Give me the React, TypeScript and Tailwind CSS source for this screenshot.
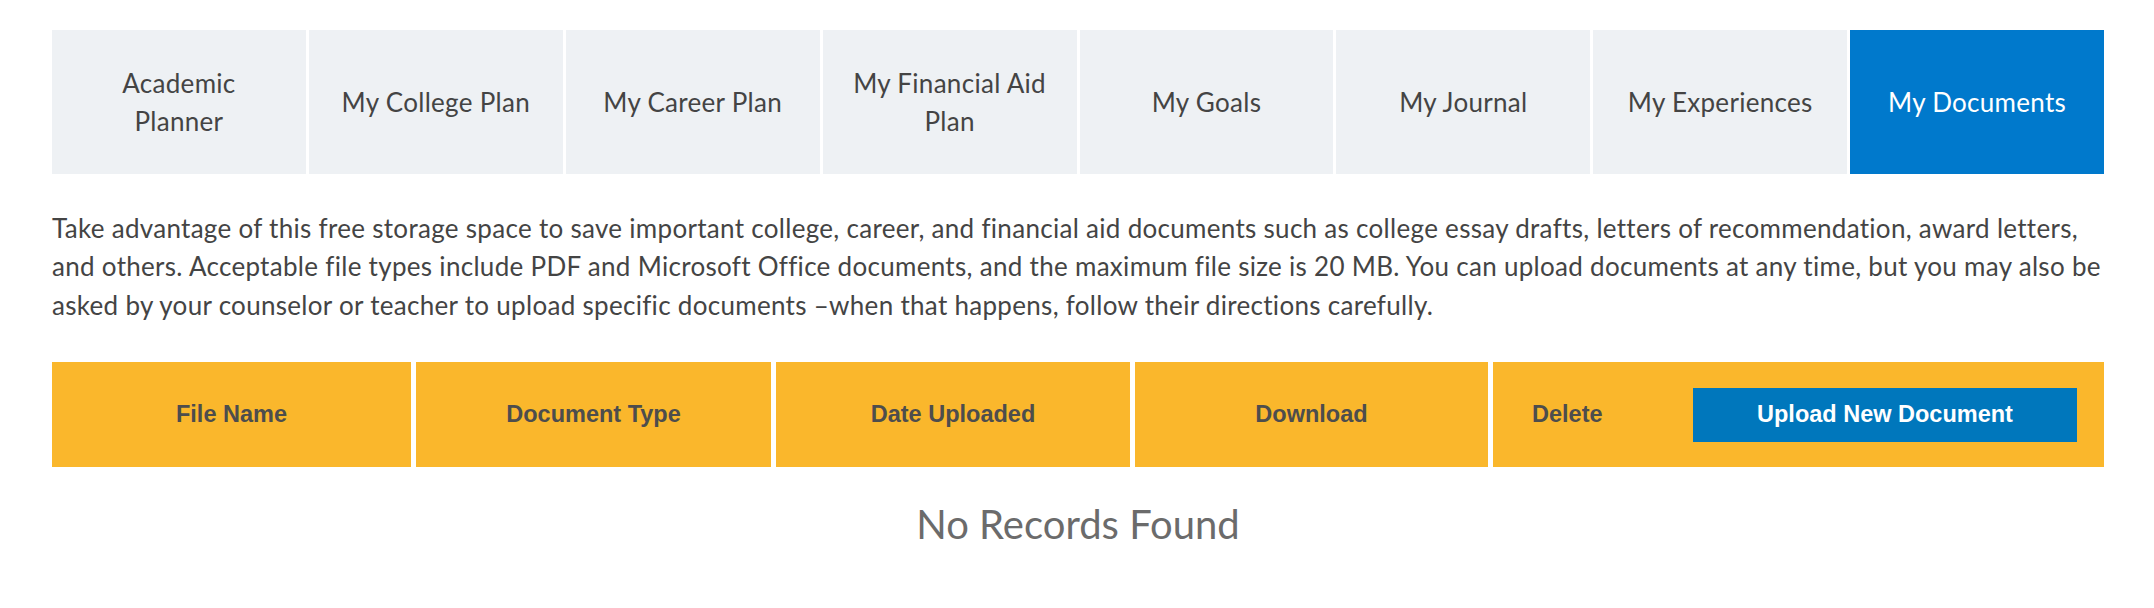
import React from "react";

const tabs = [
  "Academic Planner",
  "My College Plan",
  "My Career Plan",
  "My Financial Aid Plan",
  "My Goals",
  "My Journal",
  "My Experiences",
  "My Documents",
];

const tabLabels: React.ReactNode[] = [
  <>Academic<br />Planner</>,
  "My College Plan",
  "My Career Plan",
  <>My Financial Aid<br />Plan</>,
  "My Goals",
  "My Journal",
  "My Experiences",
  "My Documents",
];

export default function App() {
  return (
    <div className="w-[2154px] min-h-[608px] bg-white px-[52px] pt-[30px] font-['Lato',_sans-serif]">
      <div className="w-[2052px]">
        <div className="grid grid-cols-8 gap-[3px]">
          {tabs.map((t, i) => {
            const active = i === tabs.length - 1;
            return (
              <div
                key={t}
                className={
                  active
                    ? "h-[144px] flex items-center justify-center text-center bg-[#0079cc] text-white text-[26px] leading-[38.4px] tracking-[0.3px]"
                    : "h-[144px] flex items-center justify-center text-center bg-[#eef1f4] text-[#444444] text-[26px] leading-[38.4px] tracking-[0.3px]"
                }
              >
                <span>{tabLabels[i]}</span>
              </div>
            );
          })}
        </div>

        <p className="mt-[35px] text-[26px] leading-[38.4px] tracking-[0.3px] text-[#444444]">
          Take advantage of this free storage space to save important college, career, and financial aid documents such as college essay drafts, letters of recommendation, award letters, and others. Acceptable file types include PDF and Microsoft Office documents, and the maximum file size is 20 MB. You can upload documents at any time, but you may also be asked by your counselor or teacher to upload specific documents –when that happens, follow their directions carefully.
        </p>

        <div className="mt-[38px] grid grid-cols-[359px_355px_354px_353px_1fr] gap-[5px] font-['Liberation_Sans',_Arial,_sans-serif] font-bold text-[23.5px] text-[#4d4d4d]">
          <div className="h-[105px] bg-[#fab72c] flex items-center justify-center">File Name</div>
          <div className="h-[105px] bg-[#fab72c] flex items-center justify-center">Document Type</div>
          <div className="h-[105px] bg-[#fab72c] flex items-center justify-center">Date Uploaded</div>
          <div className="h-[105px] bg-[#fab72c] flex items-center justify-center">Download</div>
          <div className="h-[105px] bg-[#fab72c] flex items-center justify-between pl-[39px] pr-[27px]">
            <span>Delete</span>
            <button className="w-[384px] h-[54px] bg-[#0077bc] text-white font-bold text-[23.5px]">
              Upload New Document
            </button>
          </div>
        </div>

        <div className="mt-[25px] text-center text-[40px] leading-[1.6] text-[#6b6b6b]">
          No Records Found
        </div>
      </div>
    </div>
  );
}
